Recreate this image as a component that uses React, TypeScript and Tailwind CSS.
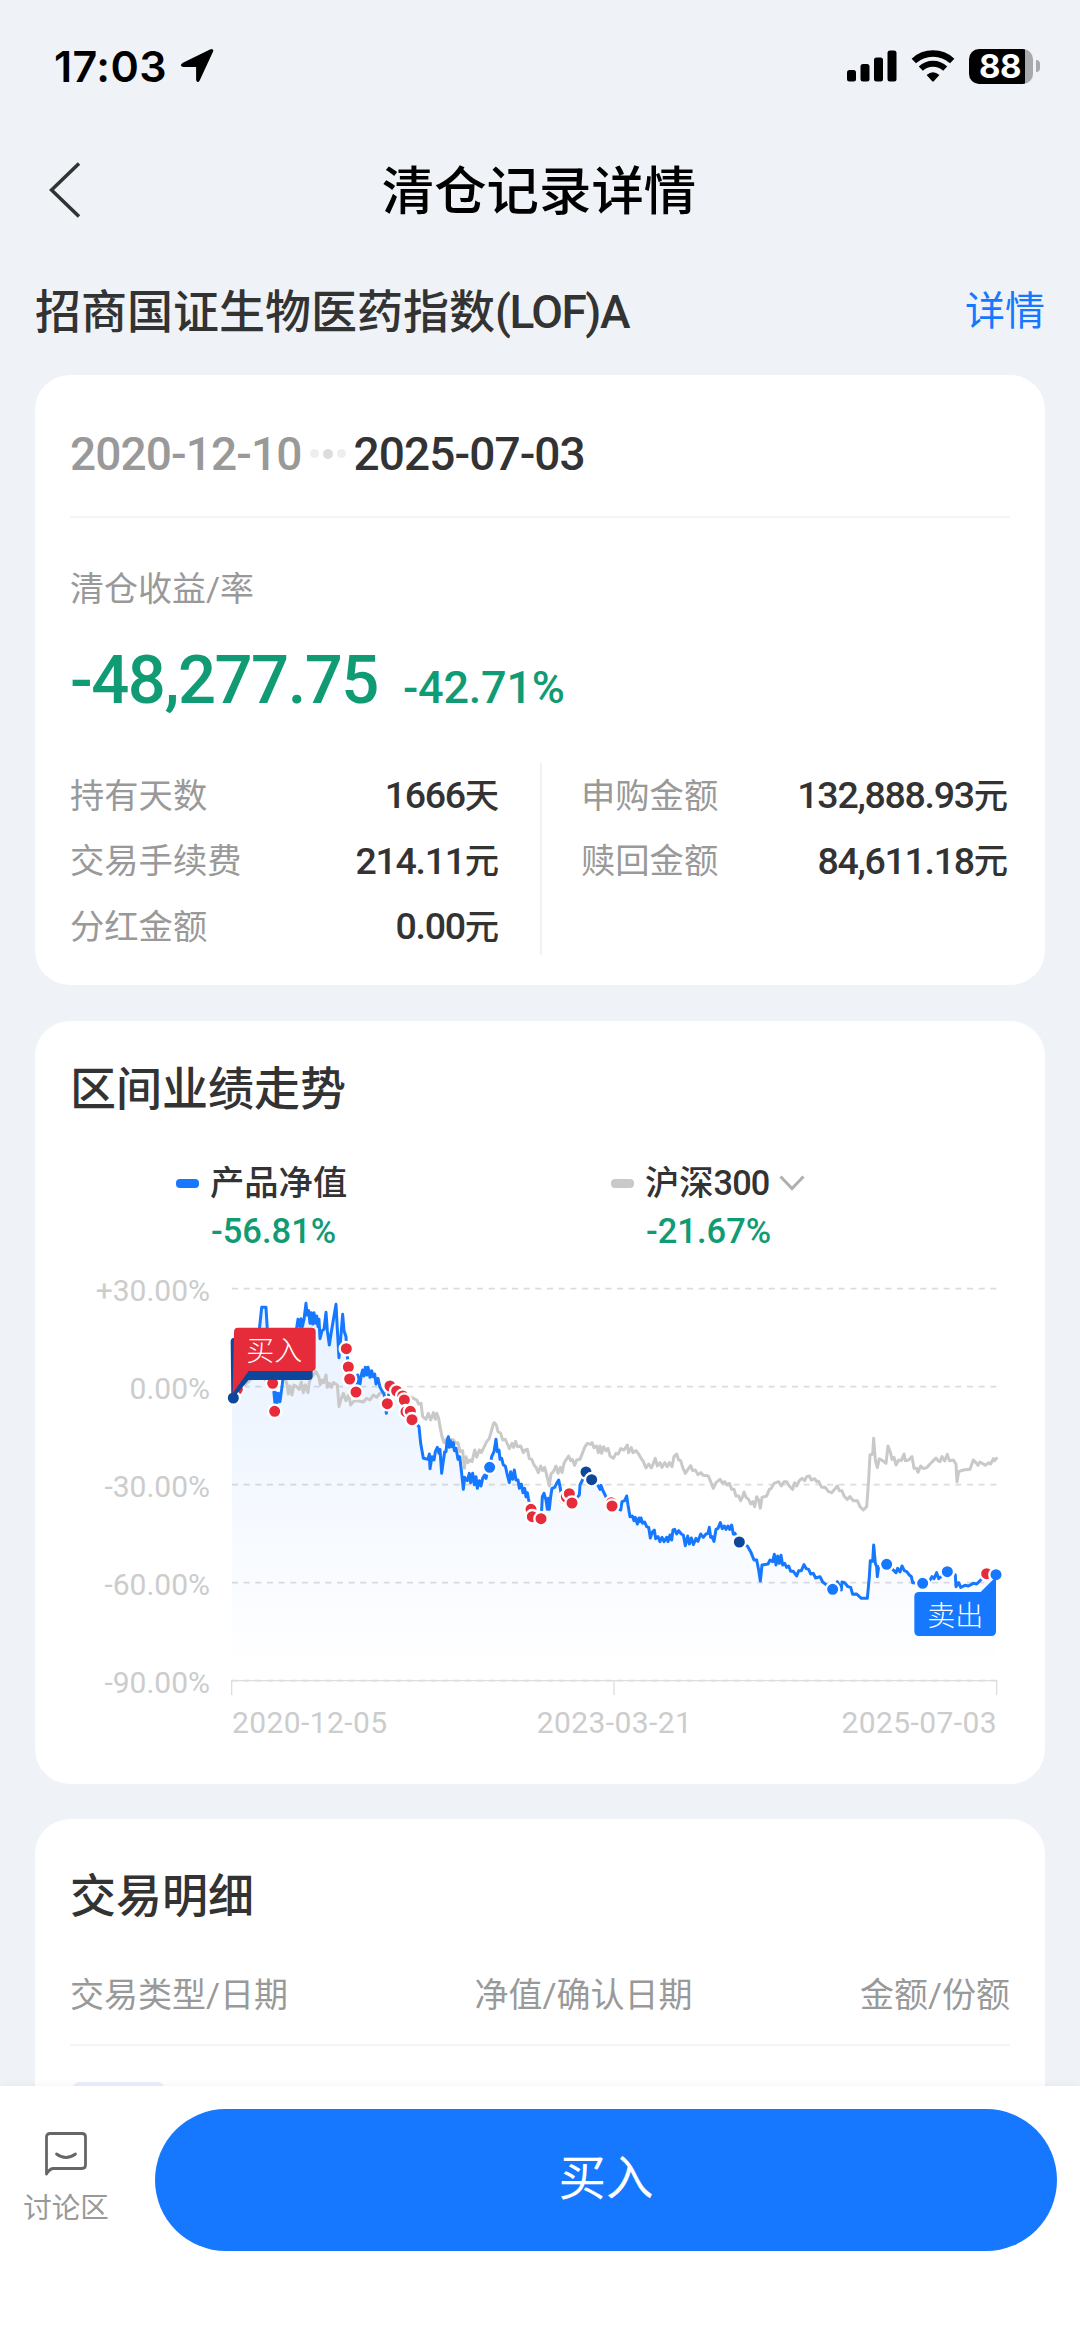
import type { ReactNode } from 'react';

type Point = [number, number];

// Chart units are a third of a pixel. Each block of a series has its own origin.
type Block = { origin: Point; points: string };

const NET_VALUE: Block[] = [
  {
    origin: [0, 0],
    points:
      '40,414 50,385 60,350 75,330 90,300 105,260 112,240 118,210 125,142 138,142 142,210 148,260 154,300 160,345 162,400 165,430 168,398 171,428 175,400 180,425 186,380 190,345 200,340 212,290 224,235 230,205 234,178 240,200 243,176 247,200 252,178 258,130 261,165 266,152 270,190 274,158 278,192 282,158 286,190 290,168 294,200 297,178 300,236 306,212 312,208 318,157 322,212 328,255 334,215 340,180 348,133 353,225 357,293 362,235 368,163 372,212 378,230 380,268 385,321 389,357 400,380 408,396 413,345 420,372 424,345 428,330 432,348 436,322 441,345 444,322 450,352 455,332 459,350 464,342 468,372 474,355 480,382 486,392 492,402 496,425 499,460 502,431 510,378 530,393 548,408 558,455 571,455 576,479 597,500 602,550 610,595 624,598 628,582 630,626 636,590 642,600 646,575 652,562 657,580 660,568 665,640 669,610 674,575 678,575 681,545 685,530 688,562 691,542 695,560 700,548 703,572 708,565 714,598 719,590 725,640 730,688 734,652 742,662 748,640 752,668 758,640 763,674 768,650 772,685 778,662 783,678 788,655 794,645 798,655 804,625 809,622',
  },
  {
    origin: [540, 360],
    points:
      '269,262 275,230 282,215 288,178 292,215 297,210 300,238 305,235 310,255 316,258 322,285 328,308 332,275 338,298 343,270 348,300 354,300 358,325 364,312 369,338 374,325 378,350 382,338 385,355 393,388 397,410 423,416 425,388 427,350 432,340 438,360 442,388 445,355 448,388 452,350 456,325 464,322 470,310 476,300 480,320 486,355 508,341 516,369 538,345 540,315 546,303 558,276 575,299 595,318 600,328 603,316 608,330 620,355 636,378 662,390 666,365 674,362 680,348 684,375 690,410 697,408 702,422 706,412 712,432 717,414',
  },
  {
    origin: [1260, 420],
    points:
      '0,365 3,354 8,370 14,366 20,380 26,382 31,414 37,396 43,390 47,416 54,410 60,425 66,412 72,425 80,412 84,425 90,405 95,420 99,390 104,388 110,402 116,392 124,402 130,405 136,437 143,408 148,432 154,414 160,434 168,415 174,424 182,402 190,412 198,402 204,400 208,382 212,412 216,410 222,424 228,388 234,385 241,368 247,386 253,378 258,388 264,378 269,388 275,375 280,402 285,400 298,426 322,438 332,455 342,480 350,480 356,510 361,543 366,495 384,492 390,480 398,485 403,463 408,495 413,468 418,490 423,466 428,495 434,490 440,502 446,498 452,514 460,514 470,528 476,512 484,512 492,494 499,506 506,508 512,522 520,520 527,534 540,530 548,546 556,552 578,568 592,545 604,570 606,546 614,548 624,560 632,562 638,583 650,582 664,595 682,595 688,530 691,482 698,484 701,435 706,490 710,500 712,530 716,500 740,493 762,512 768,518 773,505 780,516 786,498 793,512 800,515 808,525 814,530 818,548 848,550 870,540 876,530 882,536 890,518 896,536 922,515 946,525 948,560 956,548 962,562 975,556 985,558 1000,550 1010,552 1022,540 1040,521 1068,524',
  },
];

const CSI_300: Block[] = [
  {
    origin: [0, 0],
    points:
      '40,405 60,385 80,370 100,350 120,340 140,365 160,350 180,355 195,355 200,370 205,402 209,378 216,405 222,375 230,380 238,388 244,366 250,398 256,374 264,398 268,366 274,352 280,345 288,335 296,350 301,374 306,360 311,368 318,345 322,382 328,370 334,382 340,368 352,375 354,400 357,440 364,415 370,400 378,422 386,405 392,435 400,425 412,422 430,426 440,415 450,420 460,405 470,412 480,400 510,390 540,400 570,410 590,420 596,432 603,430 608,470 618,478 625,460 632,480 640,458 646,478 650,460 656,475 660,500 666,530 672,548 678,538 684,552 690,538 700,540 708,550 714,548 720,575 728,572 733,625 738,590 744,608 750,600 756,605 764,570 770,592 778,570 784,578 790,566 800,545 808,535 815,510 820,492 823,488',
  },
  {
    origin: [540, 360],
    points:
      '283,128 289,135 294,155 302,160 308,180 316,178 322,192 328,206 336,190 341,202 347,184 352,200 362,198 370,218 376,210 382,208 388,236 395,238 402,255 408,262 415,278 422,258 428,272 434,262 440,285 448,318 453,282 460,275 468,258 474,280 481,262 486,278 492,250 499,238 506,228 512,242 517,238 524,256 530,240 540,238 548,218 555,200 562,190 572,193 576,188 582,203 590,198 595,218 600,198 605,220 611,200 618,212 624,205 630,228 640,235 648,220 655,222 662,206 672,210 682,195 686,218 694,203 699,218 708,212 716,222',
  },
  {
    origin: [1260, 420],
    points:
      '0,170 10,185 18,204 26,192 34,204 40,190 46,175 52,198 60,188 66,202 74,188 82,200 88,188 96,200 102,170 110,162 116,180 122,182 128,202 136,220 144,208 152,197 158,212 166,210 174,224 182,218 190,226 205,228 212,245 220,265 228,248 240,238 248,250 254,245 262,255 268,250 275,268 282,268 288,288 296,288 302,302 308,290 312,276 318,292 326,298 332,312 338,305 344,320 350,290 356,300 361,325 366,292 380,288 388,268 394,265 402,250 416,245 424,258 432,245 440,245 448,258 458,268 464,248 470,258 478,242 486,235 494,242 500,230 508,228 514,240 524,236 530,245 536,244 545,262 555,262 566,275 575,278 584,268 592,258 598,272 606,272 612,288 622,298 630,290 640,302 652,302 660,320 670,330 680,320 686,240 690,165 698,162 701,115 706,180 712,203 718,176 728,182 738,190 744,138 752,160 756,178 762,172 768,195 776,180 784,182 792,162 796,182 806,180 816,170 822,205 830,205 834,217 842,198 850,206 860,203 870,192 878,184 888,174 894,182 900,185 906,170 914,183 922,163 928,182 940,180 948,192 951,245 956,215 970,210 990,208 1000,180 1008,188 1014,196 1020,186 1030,192 1036,196 1046,188 1052,192 1060,176 1064,182 1072,172',
  },
];

const toLine = (blocks: Block[]) =>
  blocks
    .flatMap(({ origin, points }) =>
      points.split(' ').map((p) => {
        const [x, y] = p.split(',').map(Number);
        return `${x + origin[0]},${y + origin[1]}`;
      })
    )
    .join(' ');

const RED = '#e62c3b';
const BLUE = '#1677ff';
const NAVY = '#0d479c';

const MARKERS: [number, number, string][] = [
  [52, 388, RED],
  [40, 414, NAVY],
  [158, 370, RED],
  [164, 454, RED],
  [379, 266, RED],
  [385, 321, RED],
  [389, 357, RED],
  [408, 396, RED],
  [510, 378, RED],
  [502, 431, RED],
  [530, 393, RED],
  [548, 408, RED],
  [553, 420, RED],
  [558, 455, RED],
  [571, 454, RED],
  [576, 479, RED],
  [809, 622, BLUE],
  [933, 748, RED],
  [937, 770, RED],
  [963, 776, RED],
  [1034, 716, RED],
  [1039, 711, RED],
  [1048, 701, RED],
  [1056, 729, RED],
  [1098, 636, NAVY],
  [1115, 659, NAVY],
  [1174, 728, RED],
  [1176, 738, RED],
  [1558, 846, NAVY],
  [1838, 988, BLUE],
  [2000, 913, BLUE],
  [2108, 970, BLUE],
  [2182, 935, BLUE],
  [2300, 941, RED],
  [2328, 944, BLUE],
];

const GRID = [86, 380, 674, 968, 1262];

const SUMMARY_LEFT = [
  ['持有天数', '1666', '天'],
  ['交易手续费', '214.11', '元'],
  ['分红金额', '0.00', '元'],
];

const SUMMARY_RIGHT = [
  ['申购金额', '132,888.93', '元'],
  ['赎回金额', '84,611.18', '元'],
];

const Card = ({ className, children }: { className: string; children: ReactNode }) => (
  <section className={`mx-[35px] shrink-0 rounded-[35px] bg-white ${className}`}>{children}</section>
);

const SummaryRow = ({ row }: { row: string[] }) => (
  <div className="flex h-[65.5px] items-center justify-between">
    <span className="text-[34.3px] text-[#999]">{row[0]}</span>
    <span className="flex items-center text-[34.3px] font-medium text-[#333]">
      <span className="text-[37.5px] tracking-[-1.3px]">{row[1]}</span>
      {row[2]}
    </span>
  </div>
);

const StatusBar = () => (
  <div className="flex h-[132px] shrink-0 items-center pl-[54px] pr-[40px] text-black">
    <span className="font-['Inter'] text-[43px] font-semibold tracking-[0.4px]">17:03</span>
    <svg className="ml-[13px] h-[34px] w-[34px]" viewBox="0 0 34 34">
      <path
        d="M32 2 L18.6 31 Q17.500 33 17.300 30.500 V17.700 Q17.300 16.700 16 16.700 H3.500 Q1 16.400 3 15.200 L30.500 1.600 Q32.600 0.800 32 2Z"
        stroke="#000"
        strokeWidth="2.4"
        strokeLinejoin="round"
      />
    </svg>
    <div className="ml-auto flex items-center">
      <svg className="h-[32px] w-[50px]" viewBox="0 0 50 32">
        <rect x="0" y="20" width="9" height="11.5" rx="2.5" />
        <rect x="13.5" y="14" width="9" height="17.5" rx="2.5" />
        <rect x="27" y="7.5" width="9" height="24" rx="2.5" />
        <rect x="40.5" y="0.5" width="9" height="31" rx="2.5" />
      </svg>
      <svg className="ml-[14px] h-[32px] w-[44px]" viewBox="0 0 44 32">
        <path d="M2.8 11 A28.5 28.5 0 0 1 41.2 11" fill="none" stroke="#000" strokeWidth="6.4" />
        <path d="M9.8 18.600 A18 18 0 0 1 34.200 18.600" fill="none" stroke="#000" strokeWidth="6" />
        <path d="M15.6 25 Q22 19.4 28.4 25 L23 31 Q22 32 21 31Z" />
      </svg>
      <div className="ml-[14px] flex h-[35px] w-[64px] items-center justify-center rounded-[10px] bg-[linear-gradient(90deg,#000_88%,#a7a9ad_88%)]">
        <span className="pr-0.5 font-['Inter'] text-[33px] font-bold tracking-[-0.5px] text-white">88</span>
      </div>
      <div className="ml-[3px] h-[12px] w-[4px] rounded-r-full bg-[#a7a9ad]" />
    </div>
  </div>
);

const TrendChart = () => {
  const net = toLine(NET_VALUE);
  return (
    <svg className="block h-[440px] w-[790px]" viewBox="0 0 2370 1320">
      <defs>
        <linearGradient id="area" gradientUnits="userSpaceOnUse" x1="0" y1="130" x2="0" y2="1230">
          <stop offset="0" stopColor="#1677ff" stopOpacity="0.1" />
          <stop offset="1" stopColor="#1677ff" stopOpacity="0" />
        </linearGradient>
      </defs>
      {GRID.map((y) => (
        <line key={y} x1="36" x2="2331" y1={y} y2={y} stroke="#dcdcdc" strokeWidth="5" strokeDasharray="18 17" />
      ))}
      <path d="M35 1305 V1262 H2330 V1305 M1182 1262 V1305" fill="none" stroke="#dedede" strokeWidth="4" />
      <polygon points={`36,414 ${net} 2328,1262 36,1262`} fill="url(#area)" />
      <polyline points={toLine(CSI_300)} fill="none" stroke="#c9c9c9" strokeWidth="9" strokeLinejoin="round" />
      <polyline points={net} fill="none" stroke={BLUE} strokeWidth="9" strokeLinejoin="round" />
      {MARKERS.map(([x, y, color]) => (
        <circle key={`${x}-${y}`} cx={x} cy={y} r="20" fill={color} stroke="#fff" strokeWidth="7" />
      ))}
      {/* Buy flags */}
      <path d="M44 233 H266 Q278 233 278 245 V348 Q278 360 266 360 H86 L40 414 H34 L32 245 Q32 233 44 233Z" fill={NAVY} />
      <path d="M54 203 H275 Q287 203 287 215 V321 Q287 333 275 333 H86 L38 400 L42 215 Q42 203 54 203Z" fill={RED} />
      <text x="163" y="302" fill="#fff" fontSize="84" textAnchor="middle" className="font-light">
        买入
      </text>
      {/* Sell flag */}
      <path
        d="M2097 996 H2282 L2328 950 V1114 Q2328 1128 2314 1128 H2097 Q2083 1128 2083 1114 V1010 Q2083 996 2097 996Z"
        fill={BLUE}
      />
      <text x="2206" y="1097" fill="#fff" fontSize="84" textAnchor="middle" className="font-light">
        卖出
      </text>
    </svg>
  );
};

export default function App() {
  return (
    <div className="flex h-[2339px] w-[1080px] flex-col overflow-hidden bg-[#eff3f8] font-['Roboto','Noto_Sans_CJK_SC',sans-serif] leading-none text-[#333]">
      <div className="flex h-[2086px] flex-col overflow-hidden">
        <StatusBar />

        {/* Title bar */}
        <header className="flex h-[116px] shrink-0 items-center px-[49px]">
          <svg className="h-[56px] w-[32px]" viewBox="0 0 32 56" fill="none" stroke="#333" strokeWidth="3.6">
            <path d="M30 1.5 L2.5 28 L30 54.5" />
          </svg>
          <h1 className="flex-1 pr-[34px] pt-[5px] text-center text-[52.4px] font-medium text-black">清仓记录详情</h1>
        </header>

        <div className="flex h-[127px] shrink-0 items-center justify-between px-[35px]">
          <h2 className="text-[46px] font-medium">
            招商国证生物医药指数<span className="tracking-[-1.5px]">(LOF)A</span>
          </h2>
          <a className="text-[40px] text-[#1677ff]">详情</a>
        </div>

        {/* Profit summary */}
        <Card className="h-[610px] px-[35px]">
          <div className="flex h-[143px] items-center border-b-2 border-[#f3f4f5] pt-4 text-[46px] font-medium tracking-[-0.9px]">
            <span className="text-[#999]">2020-12-10</span>
            <span className="ml-[9px] mr-[7px] flex items-center gap-[4px]">
              <i className="h-[9px] w-[9px] rounded-full bg-[#eee]" />
              <i className="h-[10px] w-[10px] rounded-full bg-[#ddd]" />
              <i className="h-[9px] w-[9px] rounded-full bg-[#eee]" />
            </span>
            <span>2025-07-03</span>
          </div>
          <div className="mt-[54px] text-[34px] text-[#999]">清仓收益/率</div>
          <div className="mt-[41px] flex items-baseline font-medium text-[#109b74]">
            <span className="text-[67px] tracking-[-1.5px]">-48,277.75</span>
            <span className="ml-[25px] text-[45px] tracking-[-0.2px]">-42.71%</span>
          </div>
          <div className="mt-[49px] flex h-[192px]">
            <div className="w-[429px]">
              {SUMMARY_LEFT.map((row) => (
                <SummaryRow key={row[0]} row={row} />
              ))}
            </div>
            <div className="ml-[41px] w-0.5 bg-[#f0f1f3]" />
            <div className="ml-[39px] flex-1 pr-0.5">
              {SUMMARY_RIGHT.map((row) => (
                <SummaryRow key={row[0]} row={row} />
              ))}
            </div>
          </div>
        </Card>

        {/* Performance trend */}
        <Card className="mt-[36px] h-[763px]">
          <h3 className="px-[35px] pt-[45px] text-[46px] font-medium">区间业绩走势</h3>
          <div className="mt-[54px] flex pl-[141px]">
            <div className="w-[435px]">
              <div className="flex items-center text-[34.300px] font-medium">
                <i className="mr-[11px] h-[9px] w-[23px] rounded-[4px] bg-[#1677ff]" />
                产品净值
              </div>
              <div className="mt-[14px] pl-[35px] text-[34.5px] font-medium text-[#109b74]">-56.81%</div>
            </div>
            <div>
              <div className="flex items-center text-[34.300px] font-medium">
                <i className="mr-[11px] h-[9px] w-[23px] rounded-[4px] bg-[#c9c9c9]" />
                沪深<span className="tracking-[-0.9px]">300</span>
                <svg className="ml-[10px] h-[16px] w-[26px]" viewBox="0 0 26 16" fill="none" stroke="#b0b0b0" strokeWidth="3">
                  <path d="M1.5 1.5 L13 13.5 L24.5 1.5" />
                </svg>
              </div>
              <div className="mt-[14px] pl-[35px] text-[34.5px] font-medium text-[#109b74]">-21.67%</div>
            </div>
          </div>
          <div className="mt-[11px] flex">
            <div className="flex w-[185px] flex-col items-end gap-[68px] pr-[10px] pt-[16px] text-[30px] text-[#ccc]">
              <span>+30.00%</span>
              <span>0.00%</span>
              <span>-30.00%</span>
              <span>-60.00%</span>
              <span>-90.00%</span>
            </div>
            <TrendChart />
          </div>
          <div className="mt-[8px] flex justify-between pl-[197px] pr-[48px] text-[30px] tracking-[0.4px] text-[#ccc]">
            <span>2020-12-05</span>
            <span>2023-03-21</span>
            <span>2025-07-03</span>
          </div>
        </Card>

        {/* Transactions */}
        <Card className="mt-[35px] h-[400px] px-[35px]">
          <h3 className="pt-[54px] text-[46px] font-medium">交易明细</h3>
          <div className="mt-[41px] flex h-[86px] items-center justify-between border-b-2 border-[#f3f4f5] pb-[15px] text-[34px] text-[#999]">
            <span>交易类型/日期</span>
            <span className="pl-[19px]">净值/确认日期</span>
            <span>金额/份额</span>
          </div>
          <div className="ml-[3px] mt-[36px] h-[48px] w-[91px] rounded-[6px] bg-[#e9effc]" />
        </Card>
      </div>

      {/* Bottom bar */}
      <footer className="flex h-[253px] items-start bg-white pl-[22px] pr-[23px] pt-[23px] shadow-[0_-2px_6px_rgba(0,0,0,0.04)]">
        <div className="flex w-[88px] flex-col items-center pt-[23px]">
          <svg className="h-[44px] w-[42px]" viewBox="0 0 42 44" fill="none" stroke="#666" strokeWidth="2.8" strokeLinejoin="round">
            <path d="M1.5 42 V5 Q1.5 1.5 5 1.5 H37 Q40.5 1.5 40.5 5 V33 Q40.5 36.5 37 36.5 H8 Q4.5 37 1.5 42Z" />
            <path d="M11.5 22 Q21 29 30.5 22" strokeLinecap="round" />
          </svg>
          <span className="mt-[19px] text-[28.5px] text-[#999]">讨论区</span>
        </div>
        <button className="ml-auto flex h-[142px] w-[902px] items-center justify-center rounded-full bg-[#1677ff] text-[47.5px] text-white">
          买入
        </button>
      </footer>
    </div>
  );
}
